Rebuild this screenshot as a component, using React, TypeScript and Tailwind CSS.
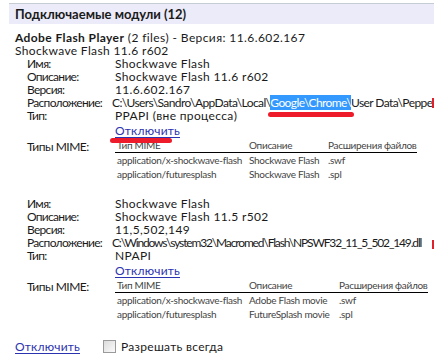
import React from "react";

type Row = { label: string; value: React.ReactNode };
type Mime = { type: string; desc: string; ext: string };

interface PluginBlockProps {
  rows: Row[];
  mimes: Mime[];
  descWidth: string;
  mark?: boolean;
}

const PluginBlock: React.FC<PluginBlockProps> = ({ rows, mimes, descWidth, mark }) => (
  <div className="pl-[12px]">
    {rows.map((r) => (
      <div key={r.label} className="flex h-[13px] items-center whitespace-nowrap">
        <div className="w-[88px] shrink-0 tracking-[-0.7px]">{r.label}</div>
        <div className="tracking-[0.35px]">{r.value}</div>
      </div>
    ))}
    <div className="relative mt-[2px] flex h-[13px] items-center">
      <div className="w-[88px]" />
      <a className="tracking-[0.2px] text-[#2c33b0] underline underline-offset-2">Отключить</a>
      {mark && (
        <div className="absolute left-[83px] top-[14px] h-[5px] w-[62px] rounded-full bg-[#ee1c2a] blur-[0.6px]" />
      )}
    </div>
    <div className="mt-[2px] flex whitespace-nowrap">
      <div className="w-[88px] shrink-0 pt-[1px] tracking-[-0.5px]">Типы MIME:</div>
      <div className="text-[10px] tracking-[-0.3px] text-[#444]">
        <div className="flex h-[14px] items-center border-b border-black pl-[2px]">
          <div className="w-[132px]">Тип MIME</div>
          <div className={descWidth}>Описание</div>
          <div>Расширения файлов</div>
        </div>
        {mimes.map((m) => (
          <div key={m.type} className="flex h-[14px] items-center pl-[2px]">
            <div className="w-[132px]">{m.type}</div>
            <div className={descWidth}>{m.desc}</div>
            <div>{m.ext}</div>
          </div>
        ))}
      </div>
    </div>
  </div>
);

export default function App() {
  return (
    <div className="relative h-[357px] w-[434px] overflow-hidden bg-white pt-[3px] font-['Lato',sans-serif] text-[12px] leading-[13px] text-[#1a1a1a]">
      <div className="ml-[9px] flex h-[21px] items-center border-t border-[#c5ccd3] bg-[#ebebf9] pl-[6px] text-[13px] font-bold">
        Подключаемые модули (12)
      </div>
      <div className="pl-[15px] pt-[7px]">
        <div className="flex h-[13px] items-center whitespace-nowrap tracking-[0.4px]">
          <span className="font-bold">Adobe Flash Player</span>
          <span>&nbsp;(2 files) - Версия: 11.6.602.167</span>
        </div>
        <div className="flex h-[13px] items-center tracking-[0.35px]">Shockwave Flash 11.6 r602</div>
        <PluginBlock
          mark
          descWidth="w-[79px]"
          rows={[
            { label: "Имя:", value: "Shockwave Flash" },
            { label: "Описание:", value: "Shockwave Flash 11.6 r602" },
            { label: "Версия:", value: "11.6.602.167" },
            {
              label: "Расположение:",
              value: (
                <span className="-ml-[3px] tracking-[-0.6px]">
                  {"C:\\Users\\Sandro\\AppData\\Local\\"}
                  <span className="bg-[#3399ff] text-white">{"Google\\Chrome\\"}</span>
                  {"User Data\\PepperFlash"}
                </span>
              ),
            },
            { label: "Тип:", value: "PPAPI (вне процесса)" },
          ]}
          mimes={[
            { type: "application/x-shockwave-flash", desc: "Shockwave Flash", ext: ".swf" },
            { type: "application/futuresplash", desc: "Shockwave Flash", ext: ".spl" },
          ]}
        />
        <div className="h-[16px]" />
        <PluginBlock
          descWidth="w-[90px]"
          rows={[
            { label: "Имя:", value: "Shockwave Flash" },
            { label: "Описание:", value: "Shockwave Flash 11.5 r502" },
            { label: "Версия:", value: "11,5,502,149" },
            {
              label: "Расположение:",
              value: (
                <span className="-ml-[3px] tracking-[-1.15px]">
                  {"C:\\Windows\\system32\\Macromed\\Flash\\NPSWF32_11_5_502_149.dll"}
                </span>
              ),
            },
            { label: "Тип:", value: "NPAPI" },
          ]}
          mimes={[
            { type: "application/x-shockwave-flash", desc: "Adobe Flash movie", ext: ".swf" },
            { type: "application/futuresplash", desc: "FutureSplash movie", ext: ".spl" },
          ]}
        />
        <div className="mt-[19px] flex items-center">
          <a className="w-[88px] tracking-[0.2px] text-[#2c33b0] underline underline-offset-2">Отключить</a>
          <span className="h-[13px] w-[13px] border border-[#9a9a9a] bg-gradient-to-br from-[#dcdcdc] to-[#fafafa]" />
          <span className="ml-[5px] tracking-[0.3px]">Разрешать всегда</span>
        </div>
      </div>
      <div className="pointer-events-none absolute left-[268px] top-[112px] h-[5px] w-[86px] rounded-full bg-[#ee1c2a] blur-[0.6px]" />
      <div className="pointer-events-none absolute left-[432px] top-[98px] h-[10px] w-[2px] bg-[#e0202a]" />
      <div className="pointer-events-none absolute left-[432px] top-[240px] h-[9px] w-[2px] bg-[#e0202a]" />
    </div>
  );
}
